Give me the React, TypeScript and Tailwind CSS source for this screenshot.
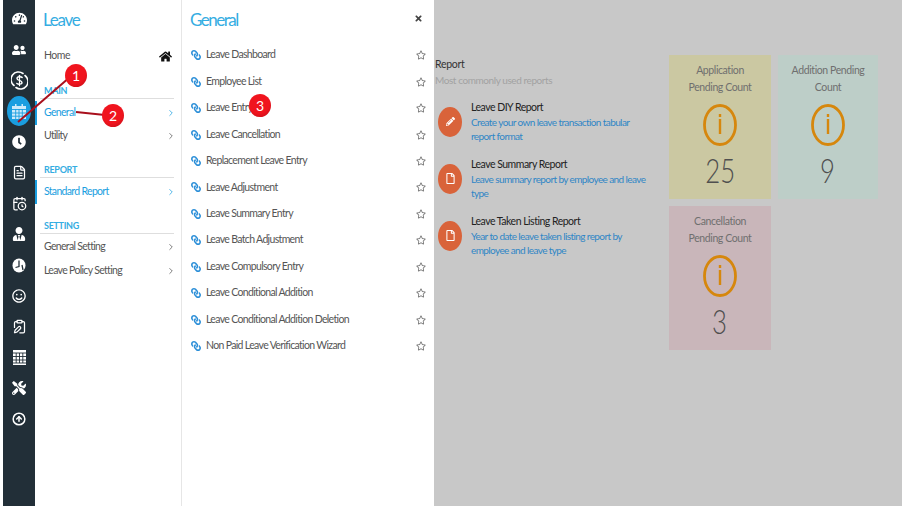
import React from "react";
import { FaHome, FaTimes, FaLink, FaRegStar, FaTachometerAlt, FaUserFriends, FaClock, FaTools, FaRegSmile, FaPencilAlt, FaRegFile, FaUserTie } from "react-icons/fa";
import { ChevronRight, FileText, CalendarClock, ClipboardPen, CircleArrowUp } from "lucide-react";

const font = { fontFamily: 'Lato, "Open Sans", sans-serif' };

function SideIcon({ children, active }: { children: React.ReactNode; active?: boolean }) {
  return (
    <div className={"flex h-[30.8px] w-full items-center justify-center"}>
      <div className={active ? "flex h-[30px] w-[24px] items-center justify-center rounded-[50%] bg-[#1a9ee0] text-white" : "flex items-center justify-center text-white"}>
        {children}
      </div>
    </div>
  );
}

function Group({ title, children }: { title: string; children: React.ReactNode }) {
  return (
    <div>
      <div className="h-[14px] pl-[9px] text-[9px] leading-[14px] font-bold tracking-[-0.3px] text-[#35ade2]">{title}</div>
      <div className="mx-[5px] h-[1px] bg-[#dedede]" />
      <div className="pt-[2px]">{children}</div>
    </div>
  );
}

function MenuRow({ label, active }: { label: string; active?: boolean }) {
  return (
    <div className={"flex h-[23.5px] items-center justify-between border-l-[2px] pr-[3px] pl-[7px] text-[10.5px] tracking-[-0.68px] " + (active ? "border-[#1a9ee0] text-[#1a9ee0]" : "border-transparent text-[#555]")}>
      <span>{label}</span>
      <ChevronRight size={10} strokeWidth={1.8} className={active ? "text-[#1a9ee0]" : "text-[#555]"} />
    </div>
  );
}

const links = [
  "Leave Dashboard",
  "Employee List",
  "Leave Entry",
  "Leave Cancellation",
  "Replacement Leave Entry",
  "Leave Adjustment",
  "Leave Summary Entry",
  "Leave Batch Adjustment",
  "Leave Compulsory Entry",
  "Leave Conditional Addition",
  "Leave Conditional Addition Deletion",
  "Non Paid Leave Verification Wizard",
];

const reports = [
  { title: "Leave DIY Report", desc: "Create your own leave transaction tabular report format", pencil: true },
  { title: "Leave Summary Report", desc: "Leave summary report by employee and leave type" },
  { title: "Leave Taken Listing Report", desc: "Year to date leave taken listing report by employee and leave type" },
];

function Card({ lines, value, bg }: { lines: string[]; value: string; bg: string }) {
  return (
    <div className={"flex h-[144px] flex-col items-center pt-[7px] " + bg}>
      <div className="text-center text-[10.5px] leading-[17px] tracking-[-0.4px] text-[#6f6f6f]">
        {lines.map((l) => (
          <div key={l}>{l}</div>
        ))}
      </div>
      <svg width="36" height="44" viewBox="0 0 36 44" className="mt-[7px]">
        <ellipse cx="18" cy="22" rx="15.5" ry="19.5" fill="none" stroke="#d6870d" strokeWidth="2.8" />
        <rect x="16.8" y="11" width="2.4" height="3" fill="#d6870d" />
        <rect x="16.8" y="16" width="2.4" height="15" fill="#d6870d" />
      </svg>
      <div className="mt-[4px] scale-x-[0.78] text-[33px] leading-[38px] font-light text-[#4f4f4f]">{value}</div>
    </div>
  );
}

function Badge({ n, className }: { n: string; className: string }) {
  return (
    <div className={"absolute flex h-[23px] w-[22px] items-center justify-center rounded-[50%] bg-[radial-gradient(circle_at_45%_40%,#f0141e_55%,#b80d16_100%)] text-[14px] text-white " + className}>
      {n}
    </div>
  );
}

function DollarIcon() {
  return (
    <svg width="17" height="19" viewBox="0 0 17 19" fill="none" stroke="white" strokeWidth="1.6" strokeLinecap="round">
      <path d="M3 14.5 A7.5 7.5 0 0 1 12 2.5" />
      <path d="M14 4.5 A7.5 7.5 0 0 1 5 16.5" />
      <path d="M11.2 6.5 C10.5 5.5 6 5.2 6 7.4 C6 9.7 11 9 11 11.5 C11 13.6 6.5 13.5 5.8 12.4" strokeWidth="1.4" />
      <path d="M8.5 4.3 V14.7" strokeWidth="1.2" />
    </svg>
  );
}

function ActiveIcon() {
  return (
    <svg width="14" height="15" viewBox="0 0 14 15">
      <rect x="0" y="2" width="14" height="13" fill="#cdeafa" />
      <rect x="3" y="0" width="1.5" height="3" fill="#cdeafa" />
      <rect x="9.5" y="0" width="1.5" height="3" fill="#cdeafa" />
      <path d="M0 5.5H14M0 9H14M0 12.2H14M3.7 5V15M7 5V15M10.3 5V15" stroke="#1a9ee0" strokeWidth="0.9" />
    </svg>
  );
}

function GridIcon() {
  return (
    <svg width="13" height="15" viewBox="0 0 13 15">
      <rect x="0" y="0" width="13" height="15" fill="white" />
      <path d="M0 3H13M0 6.5H13M0 10H13M0 13H13M3.2 3V13M6.5 3V13M9.8 3V13" stroke="#222f38" strokeWidth="0.9" />
    </svg>
  );
}

function ClockPie() {
  return (
    <svg width="14" height="15" viewBox="0 0 14 15">
      <ellipse cx="7" cy="7.5" rx="6.5" ry="7" fill="white" />
      <path d="M7 2.5V8.5L3.5 9.5M10 7L11 12" stroke="#222f38" strokeWidth="1.3" fill="none" />
    </svg>
  );
}

export default function App() {
  return (
    <div className="relative h-[510px] w-[908px] overflow-hidden bg-white" style={font}>
      <div className="ml-[3px] flex h-[506px] w-[899px]">
        <div className="w-[32px] shrink-0 bg-[#222f38] pt-[3.5px]">
          <SideIcon><FaTachometerAlt size={15} /></SideIcon>
          <SideIcon><FaUserFriends size={14} /></SideIcon>
          <SideIcon><DollarIcon /></SideIcon>
          <SideIcon active><ActiveIcon /></SideIcon>
          <SideIcon><FaClock size={14} /></SideIcon>
          <SideIcon><FileText size={15} /></SideIcon>
          <SideIcon><CalendarClock size={15} /></SideIcon>
          <SideIcon><FaUserTie size={14} /></SideIcon>
          <SideIcon><ClockPie /></SideIcon>
          <SideIcon><FaRegSmile size={14} /></SideIcon>
          <SideIcon><ClipboardPen size={15} /></SideIcon>
          <SideIcon><GridIcon /></SideIcon>
          <SideIcon><FaTools size={14} /></SideIcon>
          <SideIcon><CircleArrowUp size={14} strokeWidth={2.6} /></SideIcon>
        </div>

        <div className="w-[147px] shrink-0 border-r border-[#e6e6e6] bg-white pr-[2px] pt-[8px]">
          <div className="h-[24px] pl-[8px] text-[17px] leading-[24px] tracking-[-1.3px] text-[#35ade2]">Leave</div>
          <div className="mt-[13px] flex h-[22px] items-center justify-between pr-[7px] pl-[9px] text-[10.5px] tracking-[-0.5px] text-[#555]">
            <span>Home</span>
            <FaHome size={13} className="text-[#111]" />
          </div>
          <div className="mt-[17px]">
            <Group title="MAIN">
              <MenuRow label="General" active />
              <MenuRow label="Utility" />
            </Group>
          </div>
          <div className="mt-[15px]">
            <Group title="REPORT">
              <MenuRow label="Standard Report" active />
            </Group>
          </div>
          <div className="mt-[15px]">
            <Group title="SETTING">
              <MenuRow label="General Setting" />
              <MenuRow label="Leave Policy Setting" />
            </Group>
          </div>
        </div>

        <div className="w-[252px] shrink-0 bg-white pt-[8px]">
          <div className="flex h-[24px] items-center justify-between pr-[11px] pl-[8px]">
            <span className="text-[17px] tracking-[-1.5px] text-[#35ade2]">General</span>
            <FaTimes size={9} className="mb-[3px] text-[#444]" />
          </div>
          <div className="mt-[10px]">
            {links.map((l) => (
              <div key={l} className="flex h-[26.45px] items-center justify-between pr-[8px] pl-[9px]">
                <div className="flex items-center gap-[5px] text-[10.5px] tracking-[-0.66px] text-[#555]">
                  <FaLink size={10} className="scale-x-[-1] text-[#2c8fd8]" />
                  <span>{l}</span>
                </div>
                <FaRegStar size={10} className="text-[#777]" />
              </div>
            ))}
          </div>
        </div>

        <div className="flex min-w-0 flex-1 bg-[#c8c8c8] pt-[55px]">
          <div className="w-[235px] shrink-0 pl-[1px]">
            <div className="text-[10.5px] leading-[18px] tracking-[-0.3px] text-[#333]">Report</div>
            <div className="text-[10px] leading-[14px] tracking-[-0.42px] text-[#a2a2a2]">Most commonly used reports</div>
            <div className="mt-[11px] flex flex-col gap-[9.5px]">
              {reports.map((r) => (
                <div key={r.title} className="flex h-[47.5px] items-center gap-[9px] pl-[3px]">
                  <div className="flex h-[30px] w-[24px] shrink-0 items-center justify-center self-center rounded-[50%] bg-[#d9633a] text-white">
                    {r.pencil ? <FaPencilAlt size={9} /> : <FaRegFile size={11} />}
                  </div>
                  <div className="w-[178px]">
                    <div className="text-[10.5px] leading-[15px] tracking-[-0.5px] text-[#222]">{r.title}</div>
                    <div className="text-[10px] leading-[14.5px] tracking-[-0.6px] text-[#2f86c6]">{r.desc}</div>
                  </div>
                </div>
              ))}
            </div>
          </div>
          <div className="grid h-[293px] w-[209px] grid-cols-[102px_100px] gap-x-[7px] gap-y-[7px]">
            <Card lines={["Application", "Pending Count"]} value="25" bg="bg-[#cbc8a2]" />
            <Card lines={["Addition Pending", "Count"]} value="9" bg="bg-[#bdcec8]" />
            <Card lines={["Cancellation", "Pending Count"]} value="3" bg="bg-[#c9b6ba]" />
          </div>
        </div>
      </div>

      <svg width="908" height="510" className="pointer-events-none absolute top-0 left-0">
        <line x1="70" y1="77" x2="18" y2="122" stroke="#a80f1c" strokeWidth="2" />
        <line x1="76" y1="112" x2="105" y2="115" stroke="#a80f1c" strokeWidth="2" />
      </svg>
      <Badge n="1" className="top-[64px] left-[65px]" />
      <Badge n="2" className="top-[104px] left-[102px]" />
      <Badge n="3" className="top-[94px] left-[249px]" />
    </div>
  );
}
